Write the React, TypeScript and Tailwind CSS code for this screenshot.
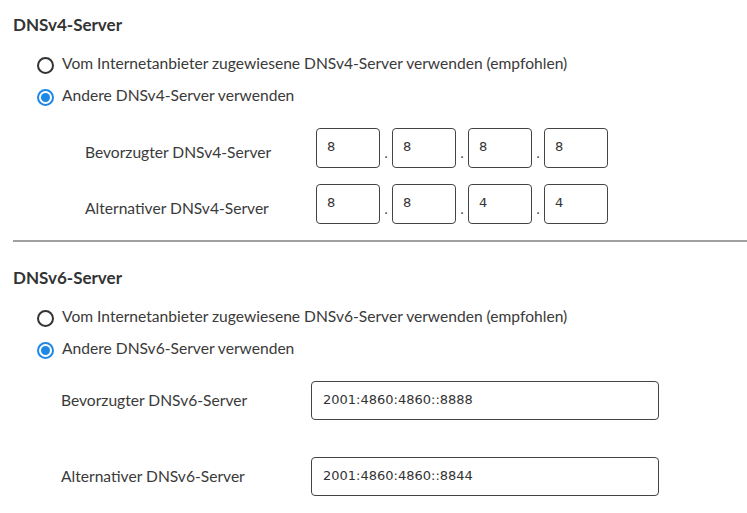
import React from 'react';

type RadioProps = { checked: boolean; label: string };

const Radio: React.FC<RadioProps> = ({ checked, label }) => (
  <label className="flex items-center h-8 gap-[8px] cursor-pointer">
    {checked ? (
      <span className="w-[17px] h-[17px] rounded-full border-2 border-[#1e88e5] flex items-center justify-center">
        <span className="w-[9px] h-[9px] rounded-full bg-[#1e88e5]" />
      </span>
    ) : (
      <span className="w-[17px] h-[17px] rounded-full border-2 border-[#333333]" />
    )}
    <span className="pb-[2px]">{label}</span>
  </label>
);

const Octets: React.FC<{ values: string[] }> = ({ values }) => (
  <div className="flex items-center">
    {values.map((v, i) => (
      <React.Fragment key={i}>
        {i > 0 && <span className="w-[12px] text-center text-[13px] leading-none pt-[10px]">.</span>}
        <div className="w-[64px] h-[40px] border border-[#444] rounded-[4px] flex items-center pl-[10px] pb-[3px] text-[13px] text-[#333]" style={{ fontFamily: '"DejaVu Sans", sans-serif' }}>
          {v}
        </div>
      </React.Fragment>
    ))}
  </div>
);

export default function App() {
  return (
    <div
      className="w-[747px] h-[513px] bg-white text-[#3a3a3a] text-[15.6px] pt-[15px] pl-[13px] overflow-hidden"
      style={{ fontFamily: 'Lato, sans-serif' }}
    >
      {/* IPv4 */}
      <h2 className="h-5 leading-5 font-bold text-[17px] text-[#333]">DNSv4-Server</h2>
      <div className="mt-[14px] pl-[24px]">
        <Radio checked={false} label="Vom Internetanbieter zugewiesene DNSv4-Server verwenden (empfohlen)" />
        <Radio checked label="Andere DNSv4-Server verwenden" />
      </div>
      <div className="mt-[15px] flex flex-col gap-4 pl-[72px]">
        <div className="flex items-center h-[40px]">
          <span className="w-[231px] pt-[10px]">Bevorzugter DNSv4-Server</span>
          <Octets values={['8', '8', '8', '8']} />
        </div>
        <div className="flex items-center h-[40px]">
          <span className="w-[231px] pt-[10px]">Alternativer DNSv4-Server</span>
          <Octets values={['8', '8', '4', '4']} />
        </div>
      </div>

      <div className="mt-4 h-[2px] bg-[#a0a0a0]" />

      {/* IPv6 */}
      <h2 className="mt-[26px] h-5 leading-5 font-bold text-[17px] text-[#333]">DNSv6-Server</h2>
      <div className="mt-[14px] pl-[24px]">
        <Radio checked={false} label="Vom Internetanbieter zugewiesene DNSv6-Server verwenden (empfohlen)" />
        <Radio checked label="Andere DNSv6-Server verwenden" />
      </div>
      <div className="mt-[15px] flex flex-col gap-[37px] pl-[48px]">
        {[
          ['Bevorzugter DNSv6-Server', '2001:4860:4860::8888'],
          ['Alternativer DNSv6-Server', '2001:4860:4860::8844'],
        ].map(([label, value]) => (
          <div key={label} className="flex items-center h-[39px]">
            <span className="w-[250px]">{label}</span>
            <div
              className="w-[348px] h-[39px] border border-[#444] rounded-[4px] flex items-center pl-[11px] pb-[2px] text-[13px] text-[#333]"
              style={{ fontFamily: '"DejaVu Sans", sans-serif' }}
            >
              {value}
            </div>
          </div>
        ))}
      </div>
    </div>
  );
}
